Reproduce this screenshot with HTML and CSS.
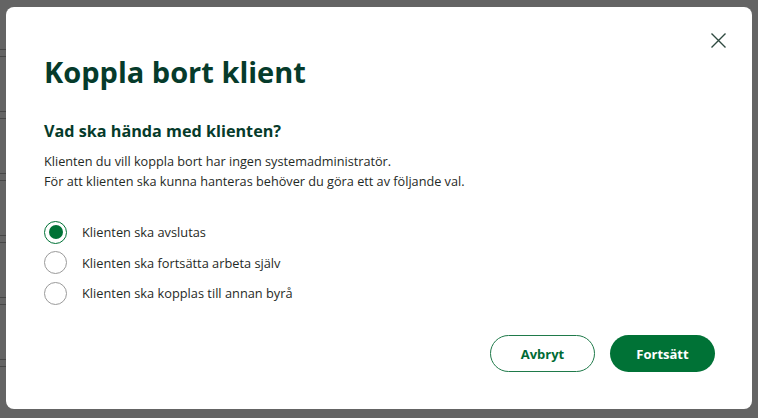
FILE: index.html
```html
<!DOCTYPE html>
<html lang="sv">
<head>
<meta charset="utf-8">
<title>Koppla bort klient</title>
<link rel="stylesheet" href="styles.css">
</head>
<body>
<div class="backdrop">
  <div class="bg-lines">
    <span class="bg-line"></span><span class="bg-line"></span>
    <span class="bg-line"></span><span class="bg-line"></span>
    <span class="bg-line"></span><span class="bg-line"></span>
  </div>
  <div class="modal">
    <button class="close" aria-label="Stäng">
      <svg width="15" height="15" viewBox="0 0 15 15"><path d="M0.5 0.5L14.5 14.5M14.5 0.5L0.5 14.5" stroke="#2f4a40" stroke-width="1.4" fill="none"/></svg>
    </button>
    <h1 class="title">Koppla bort klient</h1>
    <h2 class="subtitle">Vad ska hända med klienten?</h2>
    <p class="desc">Klienten du vill koppla bort har ingen systemadministratör.<br>För att klienten ska kunna hanteras behöver du göra ett av följande val.</p>
    <div class="options">
      <label class="option"><span class="radio checked"></span><span class="label">Klienten ska avslutas</span></label>
      <label class="option"><span class="radio"></span><span class="label">Klienten ska fortsätta arbeta själv</span></label>
      <label class="option"><span class="radio"></span><span class="label">Klienten ska kopplas till annan byrå</span></label>
    </div>
    <div class="footer">
      <button class="btn btn-outline">Avbryt</button>
      <button class="btn btn-primary">Fortsätt</button>
    </div>
  </div>
</div>
</body>
</html>
```
FILE: styles.css
```css
* { box-sizing: border-box; }
html, body { margin: 0; padding: 0; }
body {
  width: 758px;
  height: 418px;
  overflow: hidden;
  background: #646464;
  font-family: "Open Sans", "Noto Sans", sans-serif;
}
.backdrop {
  position: relative;
  width: 758px;
  height: 418px;
  padding: 7px 6px 9px 6px;
}
.bg-lines {
  position: absolute;
  left: 0;
  top: 49px;
  width: 6px;
  display: flex;
  flex-direction: column;
}
.bg-line {
  display: block;
  height: 8px;
  border-top: 1px solid #474747;
  border-bottom: 1px solid #474747;
  margin-bottom: 54px;
}
.modal {
  position: relative;
  width: 746px;
  height: 402px;
  background: #fff;
  border-radius: 8px;
  padding: 46px 37px 37px 38px;
  display: flex;
  flex-direction: column;
}
.close {
  position: absolute;
  top: 21px;
  right: 22px;
  width: 24px;
  height: 24px;
  padding: 0;
  border: 0;
  background: transparent;
  display: flex;
  align-items: center;
  justify-content: center;
}
.title {
  margin: 0;
  font-size: 29px;
  line-height: 38px;
  font-weight: 700;
  color: #063b2b;
}
.subtitle {
  margin: 28px 0 0 0;
  font-size: 16.2px;
  line-height: 24px;
  font-weight: 700;
  color: #063b2b;
}
.desc {
  margin: 8px 0 0 0;
  font-size: 12.7px;
  line-height: 20px;
  color: #1f2a26;
}
.options {
  margin-top: 26px;
  display: flex;
  flex-direction: column;
}
.option {
  display: flex;
  align-items: center;
  height: 30.5px;
  gap: 15px;
}
.radio {
  width: 23px;
  height: 23px;
  border-radius: 50%;
  border: 1px solid #9a9a9a;
  flex: none;
  position: relative;
}
.radio.checked {
  border: 1.5px solid #007236;
}
.radio.checked::after {
  content: "";
  position: absolute;
  left: 50%;
  top: 50%;
  width: 14px;
  height: 14px;
  margin: -7px 0 0 -7px;
  border-radius: 50%;
  background: #007236;
}
.label {
  font-size: 12.8px;
  color: #1f2a26;
}
.footer {
  margin-top: auto;
  display: flex;
  justify-content: flex-end;
  gap: 15px;
}
.btn {
  width: 105px;
  height: 37px;
  border-radius: 19px;
  font-family: inherit;
  font-size: 13px;
  font-weight: 700;
  cursor: pointer;
}
.btn-outline {
  background: #fff;
  color: #006b35;
  border: 1px solid #1f7a4a;
}
.btn-primary {
  background: #007236;
  color: #fff;
  border: 0;
}
```
